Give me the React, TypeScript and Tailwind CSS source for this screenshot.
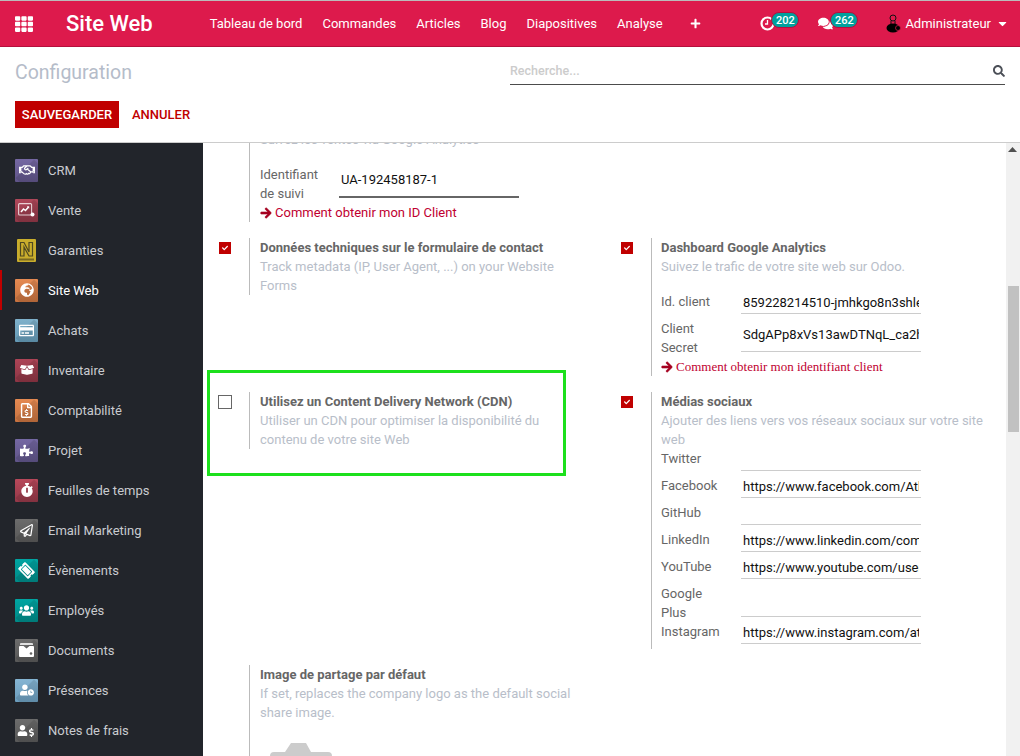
import React from "react";
import {
  FaTh, FaPlus, FaSearch, FaCheck, FaArrowRight, FaComments, FaCaretDown, FaRegHandshake,
  FaGlobeAfrica, FaRegCreditCard, FaBoxOpen, FaRegFile, FaPuzzlePiece, FaStopwatch,
  FaRegPaperPlane, FaTicketAlt, FaUsers, FaUserClock, FaUser, FaDollarSign,
} from "react-icons/fa";

const font = { fontFamily: '"Roboto", sans-serif' };

function Tile({ from, to, children }: { from: string; to: string; children: React.ReactNode }) {
  return (
    <span
      className="relative flex h-[23px] w-[23px] shrink-0 items-center justify-center overflow-hidden rounded-[1px] text-white"
      style={{ background: `linear-gradient(to bottom, ${from}, ${to})` }}
    >
      <span className="absolute left-[6px] top-[6px] h-[26px] w-[26px] rotate-45 bg-black/10" />
      <span className="relative flex items-center justify-center">{children}</span>
    </span>
  );
}

function NLogo() {
  return (
    <span className="flex h-[23px] w-[23px] shrink-0 items-center justify-center">
      <svg width="19" height="23" viewBox="0 0 19 23">
        <rect x="0" y="0" width="19" height="23" rx="1" fill="#c9ad2c" />
        <path d="M3.5 17V3.5h3.5l5 9.5V3.5h3.5V17H12L7 8v9z" fill="none" stroke="#4f4820" strokeWidth="1.2" />
        <rect x="2" y="19.5" width="15" height="2" fill="#7a6a22" />
      </svg>
    </span>
  );
}

function SalesIcon() {
  return (
    <svg width="17" height="14" viewBox="0 0 17 14">
      <rect x="0.6" y="0.6" width="13" height="11.4" rx="1" fill="none" stroke="#fff" strokeOpacity="0.75" strokeWidth="1.1" />
      <path d="M3 9l2.5-3 2 1.5L10.5 4" fill="none" stroke="#fff" strokeWidth="1.5" />
      <path d="M8.8 3.3h2.4v2.4z" fill="#fff" />
      <circle cx="14.5" cy="11.5" r="2" fill="#fff" />
    </svg>
  );
}

function DocumentsIcon() {
  return (
    <svg width="15" height="14" viewBox="0 0 15 14">
      <path d="M2 0h11a1 1 0 0 1 1 1v1H1V1a1 1 0 0 1 1-1z" fill="#fff" fillOpacity="0.8" />
      <path d="M1 3h3.5l3 2.5 3-2.5H14a1 1 0 0 1 1 1v9a1 1 0 0 1-1 1H1a1 1 0 0 1-1-1V4a1 1 0 0 1 1-1z" fill="#fff" />
      <circle cx="12" cy="10.5" r="1.3" fill="#666" />
    </svg>
  );
}

const apps: { name: string; icon: React.ReactNode; active?: boolean }[] = [
  { name: "CRM", icon: <Tile from="#7568a3" to="#5f5488"><FaRegHandshake size={16} /></Tile> },
  { name: "Vente", icon: <Tile from="#b0485a" to="#8f3747"><SalesIcon /></Tile> },
  { name: "Garanties", icon: <NLogo /> },
  { name: "Site Web", active: true, icon: <Tile from="#e58a52" to="#c5713f"><FaGlobeAfrica size={14} /></Tile> },
  { name: "Achats", icon: <Tile from="#7fb1cb" to="#6499b5"><FaRegCreditCard size={15} /></Tile> },
  { name: "Inventaire", icon: <Tile from="#ad4456" to="#8c3544"><FaBoxOpen size={14} /></Tile> },
  {
    name: "Comptabilité",
    icon: (
      <Tile from="#e58a52" to="#c5713f">
        <FaRegFile size={15} />
        <FaDollarSign size={7} className="absolute left-[4px] top-[6px]" />
      </Tile>
    ),
  },
  { name: "Projet", icon: <Tile from="#7568a3" to="#5f5488"><FaPuzzlePiece size={13} /></Tile> },
  { name: "Feuilles de temps", icon: <Tile from="#b8485a" to="#933848"><FaStopwatch size={14} /></Tile> },
  { name: "Email Marketing", icon: <Tile from="#6c6c6c" to="#585858"><FaRegPaperPlane size={13} /></Tile> },
  { name: "Évènements", icon: <Tile from="#00a5a2" to="#008a87"><FaTicketAlt size={15} className="rotate-45" /></Tile> },
  { name: "Employés", icon: <Tile from="#00a5a2" to="#008a87"><FaUsers size={15} /></Tile> },
  { name: "Documents", icon: <Tile from="#6c6c6c" to="#585858"><DocumentsIcon /></Tile> },
  { name: "Présences", icon: <Tile from="#86b5d3" to="#6a9cbc"><FaUserClock size={14} /></Tile> },
  {
    name: "Notes de frais",
    icon: (
      <Tile from="#6c6c6c" to="#585858">
        <span className="flex items-center">
          <FaUser size={11} />
          <FaDollarSign size={9} className="-ml-px mt-[4px]" />
        </span>
      </Tile>
    ),
  },
];

const navItems = ["Tableau de bord", "Commandes", "Articles", "Blog", "Diapositives", "Analyse"];

function Badge({ n, wide }: { n: number; wide?: boolean }) {
  return (
    <span
      className={`absolute top-[-4px] flex h-[16px] w-[28px] items-center justify-center rounded-full border border-[#b5103d] bg-[#00a09d] text-[11px] font-medium leading-none text-white ${
        wide ? "left-[12px]" : "left-[11px]"
      }`}
    >
      {n}
    </span>
  );
}

function Check({ on }: { on: boolean }) {
  return on ? (
    <span className="flex h-[12px] w-[12px] items-center justify-center bg-[#c00000] text-white">
      <FaCheck size={6} />
    </span>
  ) : (
    <span className="-ml-px -mt-px block h-[14px] w-[14px] border border-[#666] bg-white" />
  );
}

function Box({ checked, right, children }: { checked?: boolean; right?: boolean; children: React.ReactNode }) {
  return (
    <div className="flex items-start">
      <div className="w-[45px] shrink-0 pl-[15px] pt-[4px]">
        {checked === undefined ? null : <Check on={checked} />}
      </div>
      <div className={`w-[340px] border-l border-[#bbb] ${right ? "pl-[9px]" : "pl-[10px]"}`}>{children}</div>
    </div>
  );
}

function Title({ children }: { children: React.ReactNode }) {
  return <div className="font-bold text-[#666]">{children}</div>;
}

function Desc({ children }: { children: React.ReactNode }) {
  return <div className="text-[#b8bec9]">{children}</div>;
}

function Field({ label, value, two, w = 80, dark }: { label: React.ReactNode; value?: string; two?: boolean; w?: number; dark?: boolean }) {
  const box = dark
    ? "h-[33px] pt-[4px] border-b-2 border-[#666]"
    : two
      ? "mt-[5px] h-[28px] border-b border-[#ccc]"
      : "h-[22px] border-b border-[#ccc]";
  return (
    <div className={`flex items-start ${two ? "h-[38px]" : "h-[27px]"}`}>
      <div className="shrink-0 text-[#666]" style={{ width: w }}>
        {label}
      </div>
      <div className={`w-[180px] shrink-0 px-[2px] leading-[22px] text-[#111] ${box}`}>
        <div className="overflow-hidden whitespace-nowrap">{value ?? "\u00a0"}</div>
      </div>
    </div>
  );
}

function HelpLink({ serif, children }: { serif?: boolean; children: React.ReactNode }) {
  return (
    <div
      className="flex items-center text-[#c00030]"
      style={serif ? { fontFamily: '"Liberation Serif", serif' } : undefined}
    >
      <FaArrowRight size={12} stroke="currentColor" strokeWidth={30} className="mr-[3px] text-[#a50020]" />
      {children}
    </div>
  );
}

export default function App() {
  return (
    <div className="flex h-[756px] w-[1020px] flex-col overflow-hidden bg-white text-[13px] leading-[19px]" style={font}>
      <div className="h-px shrink-0 bg-[#bbb]" />
      <header className="flex h-[46px] shrink-0 items-center border-b border-[#b5103d] bg-[#dd1a4c] text-white">
        <FaTh size={18} className="ml-[15px]" />
        <span className="ml-[33px] text-[22px] font-medium">Site Web</span>
        <nav className="ml-[57px] flex items-center gap-[20px]">
          {navItems.map((n) => (
            <span key={n}>{n}</span>
          ))}
          <FaPlus size={11} className="ml-[7px]" />
        </nav>
        <div className="ml-auto flex items-center">
          <span className="relative mr-[43px] h-[15px] w-[15px]">
            <svg width="15" height="15" viewBox="0 0 15 15" className="block">
              <circle cx="7.5" cy="7.5" r="6" fill="none" stroke="#fff" strokeWidth="2.2" />
              <path d="M7.5 4v4H5" fill="none" stroke="#fff" strokeWidth="1.3" />
            </svg>
            <Badge n={202} />
          </span>
          <span className="relative mr-[53px] h-[15px] w-[15px]">
            <FaComments size={15} />
            <Badge n={262} wide />
          </span>
          <svg width="16" height="19" viewBox="0 0 16 19" className="mr-[3px]">
            <circle cx="7" cy="4" r="3" fill="none" stroke="#111" strokeWidth="1" />
            <path d="M5 7v4M9 7v4" stroke="#111" strokeWidth="1" />
            <ellipse cx="7" cy="14" rx="6.5" ry="4.5" fill="#000" />
            <circle cx="12" cy="14" r="2.5" fill="#000" stroke="#dd1a4c" strokeWidth="0.7" />
          </svg>
          <span>Administrateur</span>
          <FaCaretDown size={13} className="ml-[5px] mr-[11px]" />
        </div>
      </header>
      <div className="h-[96px] shrink-0 border-b border-[#ccc] pl-[15px] pr-[15px]">
        <div className="flex h-[54px] items-start">
          <div className="mt-[13px] text-[19.5px] leading-[26px] text-[#b5bcc9]">Configuration</div>
          <div className="ml-auto mt-[15px] flex h-[23px] w-[495px] items-start justify-between border-b border-[#4c4c4c]">
            <span className="text-[12.5px] font-medium leading-[18px] text-[#ccc]">Recherche...</span>
            <FaSearch size={12} className="mt-[3px] text-[#4c5058]" />
          </div>
        </div>
        <div className="flex items-center">
          <button className="h-[27px] w-[104px] bg-[#c00000] text-center text-[13px] font-medium text-white">SAUVEGARDER</button>
          <button className="ml-[13px] text-[13px] font-medium text-[#c00000]">ANNULER</button>
        </div>
      </div>
      <div className="flex min-h-0 flex-1">
        <aside className="w-[203px] shrink-0 bg-[#22252b] pt-[7px]">
          {apps.map((a) => (
            <div key={a.name} className={`relative flex h-[40px] items-center pl-[15px] ${a.active ? "text-white" : "text-[#c9cbcf]"}`}>
              {a.active && <span className="absolute left-0 top-0 h-[40px] w-[2px] bg-[#c00000]" />}
              {a.icon}
              <span className="ml-[10px]">{a.name}</span>
            </div>
          ))}
        </aside>
        <main className="relative min-w-0 flex-1 overflow-hidden pl-px">
          <div className="-mt-[13px] grid grid-cols-[402px_400px] gap-y-[16px]">
            <Box>
              <Desc>Suivez les ventes via Google Analytics</Desc>
              <div className="mt-[16px]">
                <Field label={<>Identifiant<br />de suivi</>} value="UA-192458187-1" two w={79} dark />
              </div>
              <HelpLink>Comment obtenir mon ID Client</HelpLink>
            </Box>
            <div />
            <Box checked>
              <Title>Données techniques sur le formulaire de contact</Title>
              <Desc>Track metadata (IP, User Agent, ...) on your Website Forms</Desc>
            </Box>
            <Box checked right>
              <Title>Dashboard Google Analytics</Title>
              <Desc>Suivez le trafic de votre site web sur Odoo.</Desc>
              <div className="mt-[16px]">
                <Field label="Id. client" value="859228214510-jmhkgo8n3shle" />
                <Field label={<>Client<br />Secret</>} value="SdgAPp8xVs13awDTNqL_ca2h" two />
              </div>
              <HelpLink serif>Comment obtenir mon identifiant client</HelpLink>
            </Box>
            <Box checked={false}>
              <Title>Utilisez un Content Delivery Network (CDN)</Title>
              <Desc>Utiliser un CDN pour optimiser la disponibilité du contenu de votre site Web</Desc>
            </Box>
            <Box checked right>
              <Title>Médias sociaux</Title>
              <Desc>Ajouter des liens vers vos réseaux sociaux sur votre site web</Desc>
              <Field label="Twitter" />
              <Field label="Facebook" value="https://www.facebook.com/Atk" />
              <Field label="GitHub" />
              <Field label="LinkedIn" value="https://www.linkedin.com/company" />
              <Field label="YouTube" value="https://www.youtube.com/user" />
              <Field label={<>Google<br />Plus</>} two />
              <Field label="Instagram" value="https://www.instagram.com/atk" />
            </Box>
            <Box>
              <Title>Image de partage par défaut</Title>
              <Desc>If set, replaces the company logo as the default social share image.</Desc>
              <svg width="64" height="60" viewBox="0 0 64 60" className="ml-[9px] mt-[21px] block">
                <path d="M1 60V13a4 4 0 0 1 4-4h11l6-9h15l5 9h17a4 4 0 0 1 4 4v47z" fill="#ccc" />
              </svg>
            </Box>
            <div />
          </div>
          <div className="absolute left-[4px] top-[227px] h-[106px] w-[359px] border-[3px] border-[#1de01d]" />
          <div className="absolute bottom-0 right-0 top-0 w-[14px] bg-[#f1f1f1]">
            <div className="ml-[2px] mt-[143px] h-[146px] w-[11px] bg-[#c1c1c1]" />
            <svg width="9" height="5" viewBox="0 0 9 5" className="absolute left-[2px] top-[4px]">
              <path d="M4.5 0L9 5H0z" fill="#505050" />
            </svg>
          </div>
        </main>
      </div>
    </div>
  );
}
